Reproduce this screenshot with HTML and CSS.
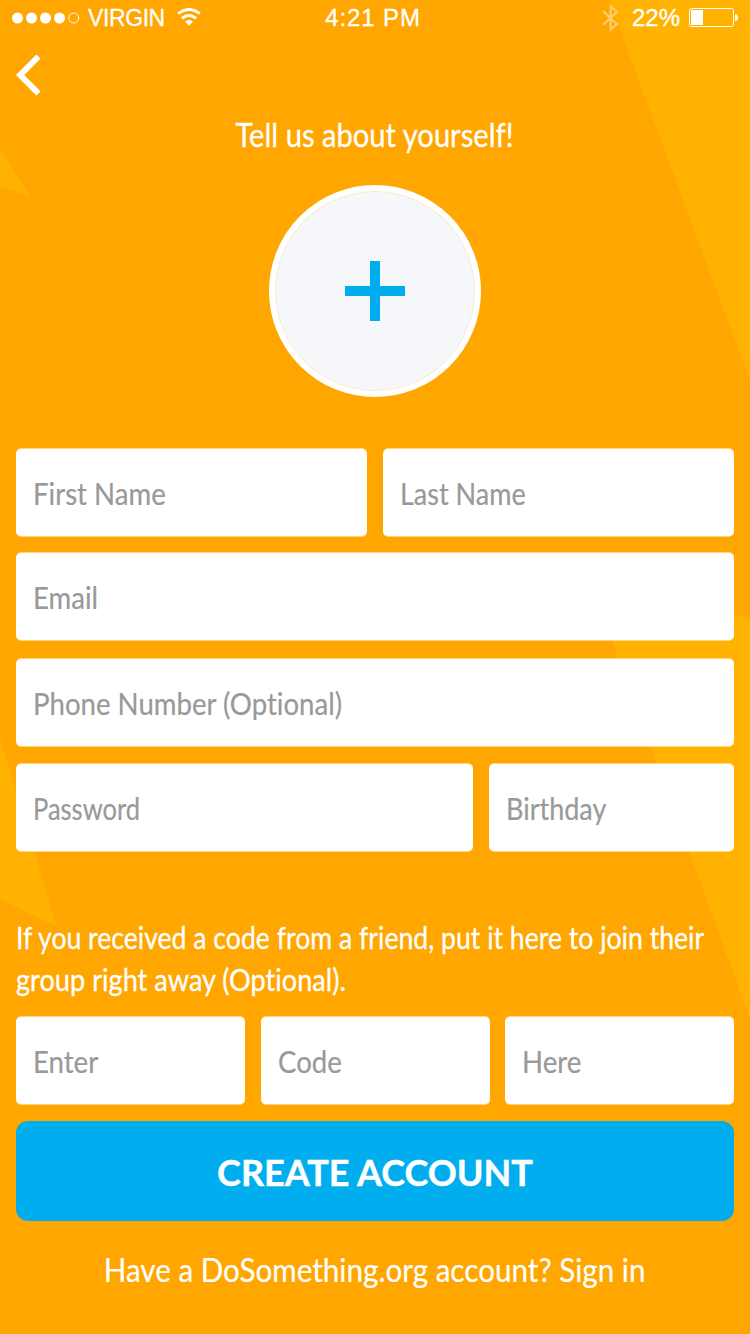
FILE: index.html
```
<!DOCTYPE html>
<html lang="en">
<head>
<meta charset="utf-8">
<title>Create account</title>
<link rel="stylesheet" href="styles.css">
</head>
<body>
<div class="screen">
  <svg class="backdrop" width="750" height="1334" viewBox="0 0 750 1334" aria-hidden="true">
    <path fill="#ffb300" d="M609 0H750V381ZM0 148L31 197L0 187ZM579 552L750 620V1018ZM0 738L57 927L0 899Z"/>
  </svg>
  <header class="status">
    <div class="status-left">
      <svg width="68" height="12" viewBox="0 0 68 12" aria-hidden="true">
        <g fill="#fff"><circle cx="5.5" cy="6" r="5.5"/><circle cx="19.5" cy="6" r="5.5"/><circle cx="33.5" cy="6" r="5.5"/><circle cx="47.5" cy="6" r="5.5"/></g>
        <circle cx="61.7" cy="6" r="5" fill="none" stroke="#fff"/>
      </svg>
      <span class="carrier">VIRGIN</span>
      <svg class="wifi" width="24" height="18" viewBox="0 0 24 18" aria-hidden="true">
        <g fill="none" stroke="#fff" stroke-width="3"><path d="M1.200 5.600Q12 -2.600 22.800 5.600"/><path d="M4.900 10.300Q12 4.600 19.100 10.300"/></g>
        <path fill="#fff" d="M8 13.500Q12 10.300 16 13.500L12 17.700Z"/>
      </svg>
    </div>
    <span class="time">4:21 PM</span>
    <div class="status-right">
      <svg class="bluetooth" width="17" height="28" viewBox="0 0 17 28" aria-hidden="true">
        <path d="M1 7L15 20.200L8.700 25.500V2.500L15 7.800L1 21" fill="none" stroke="#ffcd72" stroke-width="2.200"/>
      </svg>
      <span class="percent">22%</span>
      <svg class="battery" width="50" height="20" viewBox="0 0 50 20" aria-hidden="true">
        <rect x=".5" y=".5" width="44" height="18" rx="2" fill="none" stroke="#fff"/>
        <rect x="2" y="2" width="12" height="15" fill="#fff"/>
        <path fill="#fff" d="M46 6Q49 6 49 9.500T46 13Z"/>
      </svg>
    </div>
  </header>
  <nav class="nav">
    <svg width="26" height="42" viewBox="0 0 26 42" aria-label="Back"><path d="M22.500 2.500L4.200 21L22.500 39.500" fill="none" stroke="#fff" stroke-width="6"/></svg>
  </nav>
  <h1 class="title"><span class="fit fit-title">Tell us about yourself!</span></h1>
  <div class="avatar">
    <svg width="60" height="60" viewBox="0 0 60 60" aria-hidden="true"><path fill="#00aeef" d="M25 0H35V25H60V35H35V60H25V35H0V25H25Z"/></svg>
  </div>
  <main class="form">
    <div class="row row-name"><div class="field"><span class="fit">First Name</span></div><div class="field"><span class="fit fit-birthday">Last Name</span></div></div>
    <div class="row row-email"><div class="field"><span class="fit">Email</span></div></div>
    <div class="row row-phone"><div class="field"><span class="fit">Phone Number (Optional)</span></div></div>
    <div class="row row-password"><div class="field"><span class="fit fit-password">Password</span></div><div class="field"><span class="fit fit-birthday">Birthday</span></div></div>
    <p class="help"><span class="fit fit-help1">If you received a code from a friend, put it here to join their</span><span class="fit fit-help2">group right away (Optional).</span></p>
    <div class="row row-code"><div class="field"><span class="fit">Enter</span></div><div class="field"><span class="fit">Code</span></div><div class="field"><span class="fit">Here</span></div></div>
    <div class="button">CREATE ACCOUNT</div>
    <p class="signin"><span class="fit fit-signin">Have a DoSomething.org account? Sign in</span></p>
  </main>
</div>
</body>
</html>
```
FILE: styles.css
```
* { box-sizing: border-box; }
body { margin: 0; }
.screen { position: relative; width: 750px; height: 1334px; overflow: hidden; background: #ffa600; color: #fff; font-family: Lato, sans-serif; font-variant-ligatures: none; }
.backdrop { position: absolute; inset: 0; }
.status, .nav, .title, .avatar, .form { position: relative; }

/* Narrowed lettering */
.fit { display: inline-block; white-space: nowrap; transform: scaleX(.92); transform-origin: left center; }
.fit-title { transform: scaleX(.883); transform-origin: center; }
.fit-password { transform: scaleX(.85); }
.fit-birthday { transform: scaleX(.9); }
.fit-help1 { transform: scaleX(.887); }
.fit-help2 { transform: scaleX(.905); }
.fit-signin { transform: scaleX(.898); transform-origin: center; }

.status { display: grid; grid-template-columns: 1fr auto 1fr; align-items: center; height: 36px; padding: 0 11px 0 12px; font: 24px/36px "Liberation Sans", sans-serif; -webkit-text-stroke: .3px #fff; }
.status-left, .status-right { display: flex; align-items: center; }
.status-right { justify-content: flex-end; }
.carrier { width: 77px; margin-left: 8px; font-size: 23px; letter-spacing: -.4px; }
.wifi { margin-left: 12px; margin-top: -2px; }
.time { margin-right: 5px; letter-spacing: .9px; }
.percent { margin: 0 9px 0 13px; }
.nav { height: 60px; padding: 18px 16px; }
.nav svg { display: block; }
.title { margin: 17px 0 0; text-align: center; font-size: 33px; line-height: 42px; font-weight: 400; -webkit-text-stroke: .3px #fff; }
.avatar { width: 212px; height: 212px; margin: 30px auto 0; border: 6px solid #fff; border-radius: 50%; background: #f5f7fa; box-shadow: inset 0 0 0 1px #fbe9cd; display: flex; align-items: center; justify-content: center; }

.form { padding: 51px 16px 0; }
.row { display: grid; grid-template-rows: 89px; column-gap: 16px; }
.row-name { grid-template-columns: 1fr 1fr; }
.row-email { margin-top: 15px; }
.row-phone { margin-top: 17px; }
.row-password { margin-top: 16px; grid-template-columns: 457px 1fr; }
.row-code { grid-template-columns: 229px 229px 229px; column-gap: 15.5px; }
.field { background: #fff; background-clip: padding-box; border: 0 solid rgba(255, 255, 255, .5); border-width: 1px 0; border-radius: 5px; padding-left: 17px; color: #999; font-size: 30px; line-height: 89px; height: 89px; -webkit-text-stroke: .2px #999; }
.help { display: flex; flex-direction: column; align-items: flex-start; margin: 0; padding-top: 64px; height: 164px; font-size: 30px; line-height: 42px; -webkit-text-stroke: .3px #fff; }
.button { margin-top: 16px; height: 100px; border-radius: 12px; background: #00aeef; text-align: center; font-size: 36px; line-height: 102px; font-weight: 700; -webkit-text-stroke: .4px #fff; }
.signin { margin: 27px 0 0; text-align: center; font-size: 33px; line-height: 42px; -webkit-text-stroke: .2px #fff; }
```
